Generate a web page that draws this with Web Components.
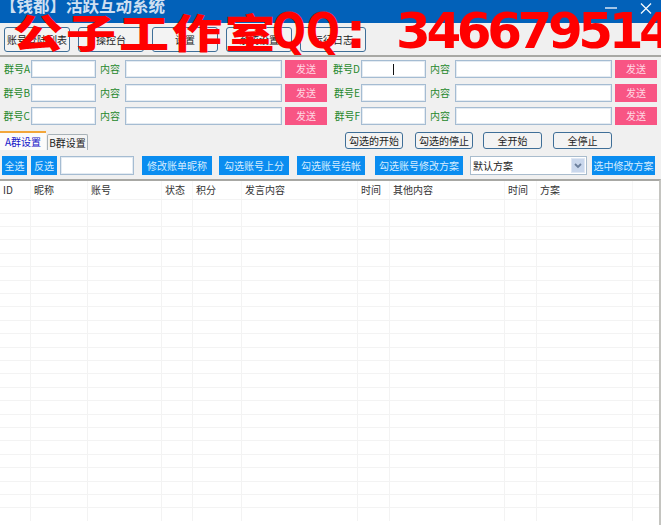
<!DOCTYPE html>
<html lang="zh">
<head>
<meta charset="utf-8">
<title>活跃互动系统</title>
<style>
  html, body { margin: 0; padding: 0; background: #f0f0f0; }
  body { font: 10px "Noto Sans CJK SC", "Liberation Sans", sans-serif; overflow: hidden; }
</style>
</head>
<body>
<qd-window>
  <qd-titlebar slot="title">【钱都】活跃互动系统</qd-titlebar>

  <qd-toolbar>
    <qd-tool-button>账号登陆列表</qd-tool-button>
    <qd-tool-button>操控台</qd-tool-button>
    <qd-tool-button>设置</qd-tool-button>
    <qd-tool-button>系统设置</qd-tool-button>
    <qd-tool-button>运行日志</qd-tool-button>
  </qd-toolbar>

  <qd-group-form>
    <qd-group-field label="群号A"></qd-group-field>
    <qd-group-field label="群号D" caret></qd-group-field>
    <qd-group-field label="群号B"></qd-group-field>
    <qd-group-field label="群号E"></qd-group-field>
    <qd-group-field label="群号C"></qd-group-field>
    <qd-group-field label="群号F"></qd-group-field>
  </qd-group-form>

  <qd-tabbar></qd-tabbar>
  <qd-actionbar></qd-actionbar>
  <qd-table></qd-table>

  <qd-watermark slot="overlay"></qd-watermark>
</qd-window>

<script>
// small helper, every element gets an open shadow root from a string
function shadow (el, html) {
  const root = el.attachShadow({mode: 'open'});
  root.innerHTML = html;
  return root;
}

class QdWindow extends HTMLElement {
  constructor () {
    super();
    shadow(this, `
      <style>
        :host { display: flex; flex-direction: column; position: relative; width: 661px; height: 525px; overflow: hidden; background: #f0f0f0; }
      </style>
      <slot name="title"></slot>
      <slot></slot>
      <slot name="overlay"></slot>
    `);
  }
}

class QdTitlebar extends HTMLElement {
  constructor () {
    super();
    shadow(this, `
      <style>
        :host { display: flex; align-items: flex-start; justify-content: space-between; height: 23px; background: #0261b9; color: #e6eef8; overflow: hidden; flex: none; }
        .text { font: 700 16.5px/16px "Noto Sans CJK SC", sans-serif; margin: -3px 0 0 0; white-space: nowrap; opacity: .9; }
        .btns { display: flex; gap: 23px; padding: 3px 9px 0 0; }
        svg { display: block; }
      </style>
      <div class="text"><slot></slot></div>
      <div class="btns">
        <svg width="12" height="12" viewBox="0 0 12 12"><path d="M0 5h12" stroke="#e8f0fa" stroke-width="1.4"/></svg>
        <svg width="12" height="11" viewBox="0 0 12 11"><path d="M1 .5l10 10M11 .5l-10 10" stroke="#f4f8fc" stroke-width="1.3"/></svg>
      </div>
    `);
  }
}

class QdToolbar extends HTMLElement {
  constructor () {
    super();
    shadow(this, `
      <style>
        :host { display: flex; flex: none; gap: 8px; height: 28px; padding: 4px 0 0 4px; box-sizing: content-box; border-bottom: 2px solid #a8a8a4; }
      </style>
      <slot></slot>
    `);
  }
}

class QdToolButton extends HTMLElement {
  constructor () {
    super();
    shadow(this, `
      <style>
        :host { display: flex; flex: none; align-items: center; justify-content: center; box-sizing: border-box; width: 66px; height: 25px; border: 1px solid #3f6f98; border-radius: 3px; background: #f3f3f3; color: #222; font: 10px "Noto Sans CJK SC", sans-serif; white-space: nowrap; }
        :host([small]) { height: 17px; width: 58px; }
      </style>
      <slot></slot>
    `);
  }
}

class QdTextBox extends HTMLElement {
  constructor () {
    super();
    const caret = this.hasAttribute('caret');
    shadow(this, `
      <style>
        :host { display: block; position: relative; box-sizing: border-box; height: 18px; background: #fff; border: 1px solid #a5bcd2; box-shadow: inset 0 0 0 1px #e4ebf2; }
        i { position: absolute; left: 31px; top: 3px; width: 1px; height: 11px; background: #111; }
      </style>
      ${caret ? '<i></i>' : ''}
    `);
  }
}

class QdGroupForm extends HTMLElement {
  constructor () {
    super();
    shadow(this, `
      <style>
        :host { display: grid; flex: none; grid-template-columns: 327px 327px; column-gap: 3px; row-gap: 5.5px; padding-top: 3px; }
      </style>
      <slot></slot>
    `);
  }
}

class QdGroupField extends HTMLElement {
  constructor () {
    super();
    const caret = this.hasAttribute('caret') ? 'caret' : '';
    shadow(this, `
      <style>
        :host { display: flex; height: 18px; align-items: center; color: #26882c; font: 10px/18px "Noto Sans CJK SC", sans-serif; }
        .lbl { width: 30px; margin-right: 1px; text-align: right; white-space: nowrap; flex: none; }
        .txt { margin: 0 5px 0 4px; width: 20px; white-space: nowrap; flex: none; }
        .id { width: 65px; flex: none; }
        .wide { width: 157px; flex: none; }
        .send { margin-left: 3px; width: 42px; flex: none; display: flex; align-items: center; justify-content: center; height: 18px; background: #f85584; color: #ffd7e2; }
      </style>
      <span class="lbl">${this.getAttribute('label')}</span>
      <qd-text-box class="id" ${caret}></qd-text-box>
      <span class="txt">内容</span>
      <qd-text-box class="wide"></qd-text-box>
      <span class="send">发送</span>
    `);
  }
}

class QdTabbar extends HTMLElement {
  constructor () {
    super();
    shadow(this, `
      <style>
        :host { display: flex; flex: none; align-items: flex-end; height: 19px; margin-top: 6px; font: 10px/15px "Noto Sans CJK SC", sans-serif; }
        .tab { box-sizing: border-box; display: flex; align-items: center; justify-content: center; white-space: nowrap; }
        .a { width: 46px; height: 19px; background: #fbfbfb; color: #1414c8; border-top: 2px solid #f2a63a; }
        .b { width: 41px; height: 16px; margin-left: 1px; background: #f4f4f4; color: #222; border: 1px solid #a8b2b8; border-bottom: 0; border-radius: 2px 2px 0 0; }
        .right { display: flex; margin-left: 257px; align-self: flex-start; padding-top: 1px; }
        .right :nth-child(2) { margin-left: 12px; }
        .right :nth-child(3) { margin-left: 10px; width: 59px; }
        .right :nth-child(4) { margin-left: 11px; width: 59px; }
      </style>
      <span class="tab a">A群设置</span>
      <span class="tab b">B群设置</span>
      <div class="right">
        <qd-tool-button small>勾选的开始</qd-tool-button>
        <qd-tool-button small>勾选的停止</qd-tool-button>
        <qd-tool-button small>全开始</qd-tool-button>
        <qd-tool-button small>全停止</qd-tool-button>
      </div>
    `);
  }
}

class QdActionButton extends HTMLElement {
  constructor () {
    super();
    shadow(this, `
      <style>
        :host { display: flex; flex: none; align-items: center; justify-content: center; height: 19px; background: #0a8df0; color: #d5ecff; font: 10px "Noto Sans CJK SC", sans-serif; white-space: nowrap; }
      </style>
      <slot></slot>
    `);
  }
}

class QdSelect extends HTMLElement {
  constructor () {
    super();
    shadow(this, `
      <style>
        :host { display: flex; flex: none; align-items: center; justify-content: space-between; box-sizing: border-box; height: 19px; background: #fff; border: 1px solid #a9bccd; color: #222; font: 10px "Noto Sans CJK SC", sans-serif; padding-left: 2px; }
        .arrow { display: flex; align-items: center; justify-content: center; width: 14px; height: 15px; margin-right: 1px; background: #c9d7ec; border: 1px solid #dfe7f3; box-sizing: border-box; }
      </style>
      <slot></slot>
      <span class="arrow"><svg width="8" height="6" viewBox="0 0 8 6"><path d="M1 1l3 3 3-3" fill="none" stroke="#6b7f9c" stroke-width="1.8"/></svg></span>
    `);
  }
}

class QdActionbar extends HTMLElement {
  constructor () {
    super();
    shadow(this, `
      <style>
        :host { display: flex; flex: none; height: 19px; margin-top: 6px; padding-left: 2px; }
        qd-text-box { height: 19px; flex: none; }
      </style>
      <qd-action-button style="width:25px">全选</qd-action-button>
      <qd-action-button style="width:26px;margin-left:4px">反选</qd-action-button>
      <qd-text-box style="width:74px;margin-left:3px"></qd-text-box>
      <qd-action-button style="width:70px;margin-left:8px">修改账单昵称</qd-action-button>
      <qd-action-button style="width:70px;margin-left:7px">勾选账号上分</qd-action-button>
      <qd-action-button style="width:68px;margin-left:8px">勾选账号结帐</qd-action-button>
      <qd-action-button style="width:88px;margin-left:10px">勾选账号修改方案</qd-action-button>
      <qd-select style="width:117px;margin-left:7px">默认方案</qd-select>
      <qd-action-button style="width:63px;margin-left:5px">选中修改方案</qd-action-button>
    `);
  }
}

class QdTable extends HTMLElement {
  constructor () {
    super();
    const cols = ['ID', '昵称', '账号', '状态', '积分', '发言内容', '时间', '其他内容', '时间', '方案', ''];
    const track = '31px 57px 74px 31px 49px 116px 32px 115px 32px 96px 1fr';
    const head = cols.map(c => `<span>${c}</span>`).join('');
    let rows = '';
    for (let i = 0; i < 24; i++) {
      rows += '<div class="row">' + cols.map(() => '<i></i>').join('') + '</div>';
    }
    shadow(this, `
      <style>
        :host { display: block; flex: 1; margin-top: 4px; background: #fff; border-top: 2px solid #a8a8a4; border-right: 2px solid #c4c4c0; overflow: hidden; color: #333; font: 10px "Noto Sans CJK SC", sans-serif; }
        .head, .row { display: grid; grid-template-columns: ${track}; }
        .head { height: 18.3px; align-items: center; }
        .head span { padding-left: 3px; border-right: 1px solid #f6f6f6; height: 100%; line-height: 18px; white-space: nowrap; box-sizing: border-box; }
        .row { height: 13.4px; box-sizing: border-box; border-top: 1px solid #f3f3f3; }
        .row i { border-right: 1px solid #f3f3f3; }
        .head span:last-child, .row i:last-child { border-right: 0; }
      </style>
      <div class="head">${head}</div>
      ${rows}
    `);
  }
}

class QdWatermark extends HTMLElement {
  constructor () {
    super();
    // big red text painted across the toolbar, the glyphs are stretched to the wide shape
    shadow(this, `
      <style>
        :host { position: absolute; left: 0; top: 0; width: 661px; height: 60px; overflow: hidden; white-space: nowrap; color: #ff0000; pointer-events: none; }
        span { position: absolute; top: 0; }
        .cn { left: 13px; font: 900 40px/62px "Noto Sans CJK SC", sans-serif; letter-spacing: 2.4px; transform: scaleX(1.25); transform-origin: left center; }
        .qq { left: 272px; font: 700 50px/62px "DejaVu Sans", sans-serif; transform: scaleX(.8); transform-origin: left center; }
        .colon { left: 346px; font: 700 50px/62px "DejaVu Sans", sans-serif; }
        .num { left: 396px; font: 700 50px/62px "DejaVu Sans", sans-serif; letter-spacing: -4.4px; }
      </style>
      <span class="cn">公子工作室</span><span class="qq">QQ</span><span class="colon">:</span><span class="num">346679514</span>
    `);
  }
}

customElements.define('qd-window', QdWindow);
customElements.define('qd-titlebar', QdTitlebar);
customElements.define('qd-toolbar', QdToolbar);
customElements.define('qd-tool-button', QdToolButton);
customElements.define('qd-text-box', QdTextBox);
customElements.define('qd-group-form', QdGroupForm);
customElements.define('qd-group-field', QdGroupField);
customElements.define('qd-tabbar', QdTabbar);
customElements.define('qd-action-button', QdActionButton);
customElements.define('qd-select', QdSelect);
customElements.define('qd-actionbar', QdActionbar);
customElements.define('qd-table', QdTable);
customElements.define('qd-watermark', QdWatermark);
</script>
</body>
</html>
